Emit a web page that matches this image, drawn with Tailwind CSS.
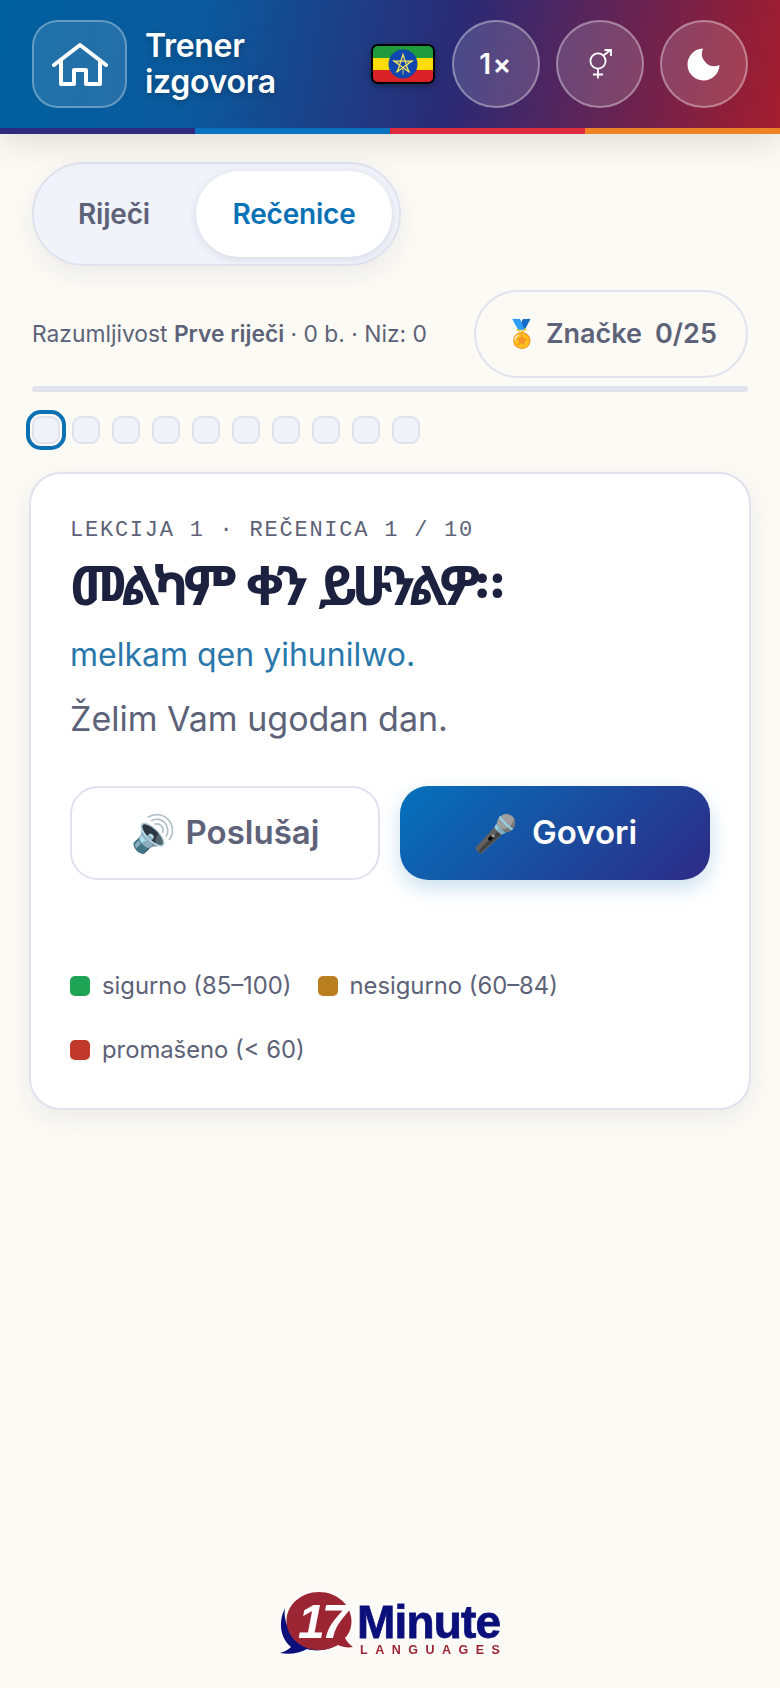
<!DOCTYPE html>
<html lang="hr">
<head>
<meta charset="utf-8">
<script src="https://cdn.jsdelivr.net/npm/@tailwindcss/browser@4"></script>
</head>
<body class="m-0 bg-[#fbfaf5] font-['Inter','Noto_Sans',sans-serif]">
<div class="w-[780px] h-[1688px] flex flex-col overflow-hidden">
  <header class="relative shadow-[0_8px_32px_rgba(0,0,0,0.12)]">
    <div class="h-[128px] px-[32px] flex items-center bg-[linear-gradient(100deg,#00609f_0%,#0a5a9d_25%,#2b2a75_58%,#a31c2e_100%)]">
      <div class="w-[95px] h-[88px] rounded-[26px] border-2 border-white/30 bg-white/12 flex items-center justify-center">
        <svg width="56" height="44" viewBox="0 0 56 44" fill="none" stroke="white" stroke-width="4" stroke-linecap="round" stroke-linejoin="round"><path d="M2 23 28 3l26 20"/><path d="M9 19V42H22V28H34V42H48V19"/></svg>
      </div>
      <div class="ml-[18px] text-white text-[32px] tracking-[-0.3px] leading-[36px] font-semibold [text-shadow:0_2px_6px_rgba(0,0,0,0.25)]">Trener<br>izgovora</div>
      <div class="ml-auto w-[64px] h-[40px] rounded-[7px] border-2 border-black overflow-hidden relative shadow-[0_2px_6px_rgba(0,0,0,0.35)] flex flex-col">
        <div class="flex-1 bg-[#1f9a3c]"></div><div class="flex-1 bg-[#fcdd09]"></div><div class="flex-1 bg-[#da2128]"></div>
        <svg class="absolute left-[15px] top-[3px]" width="30" height="30" viewBox="0 0 30 30"><circle cx="15" cy="15" r="14.5" fill="#0f47af"/><path d="M15 5.5 20.6 22.7 6 12.1H24L9.4 22.7Z" fill="none" stroke="#f5e35a" stroke-width="1.2"/><path d="M15 19.5v6M19.3 13.6l5.7-1.9M5 11.7l5.7 1.900M11.500 18.500l-3.500 4.800M18.500 18.500l3.500 4.800" stroke="#f5e35a" stroke-width="0.8"/></svg>
      </div>
      <div class="ml-[17px] w-[88px] h-[88px] rounded-full border-2 border-white/35 bg-white/15 flex items-center justify-center text-white text-[28px] tracking-[1.5px] font-semibold">1×</div>
      <div class="ml-[16px] w-[88px] h-[88px] rounded-full border-2 border-white/35 bg-white/15 flex items-center justify-center">
        <svg width="24" height="30" viewBox="0 0 24 30" fill="none" stroke="white" stroke-width="1.8"><circle cx="10" cy="12" r="7.6"/><path d="M10 19.600V29.500M5 25.500H15M15.500 6.500 22.500 1M16.500 1H23V7"/></svg>
      </div>
      <div class="ml-[16px] w-[88px] h-[88px] rounded-full border-2 border-white/35 bg-white/15 flex items-center justify-center">
        <svg width="34" height="34" viewBox="0 0 34 34"><path d="M16 1.500A16 16 0 1 0 32.500 18 12.500 12.500 0 0 1 16 1.500z" fill="white"/></svg>
      </div>
    </div>
    <div class="h-[6px] flex">
      <div class="flex-1 bg-[#2e2a7f]"></div><div class="flex-1 bg-[#0a71bf]"></div><div class="flex-1 bg-[#df2a3e]"></div><div class="flex-1 bg-[#f08226]"></div>
    </div>
  </header>

  <main class="flex-1 flex flex-col px-[32px] pt-[28px]">
    <div class="self-start w-[369px] h-[104px] rounded-full border-2 border-[#e0e2ee] bg-[#f0f3f9] p-[7px] flex shadow-[0_8px_24px_rgba(30,40,90,0.07)]">
      <div class="w-[146px] mr-[9px] flex items-center justify-center text-[28px] tracking-[-0.2px] font-semibold text-[#5d6278]">Riječi</div>
      <div class="flex-1 rounded-full bg-white flex items-center justify-center text-[28px] tracking-[-0.2px] font-semibold text-[#0a71b5] shadow-[0_2px_8px_rgba(30,40,90,0.12)]">Rečenice</div>
    </div>

    <div class="mt-[24px] flex items-center justify-between">
      <div class="text-[22.8px] text-[#5d6278]">Razumljivost <b class="font-semibold">Prve riječi</b> · 0 b. · Niz: 0</div>
      <div class="w-[274px] h-[88px] rounded-full border-2 border-[#e0e2ee] flex items-center justify-center gap-[13px] text-[27px] font-semibold text-[#5d6278]"><span>🏅 Značke</span><span>0/25</span></div>
    </div>

    <div class="mt-[8px] h-[6px] rounded-full bg-[#e0e2ee]"></div>

    <div class="mt-[24px] h-[28px] flex items-center gap-[12px]">
      <div class="w-[28px] h-[28px] rounded-[9px] bg-[#f0f3f9] border-2 border-[#e0e2ee] outline-[4px] outline-[#0a71b5] outline-offset-[2px]"></div>
      <div class="w-[28px] h-[28px] rounded-[9px] bg-[#f0f3f9] border-2 border-[#e0e2ee]"></div>
      <div class="w-[28px] h-[28px] rounded-[9px] bg-[#f0f3f9] border-2 border-[#e0e2ee]"></div>
      <div class="w-[28px] h-[28px] rounded-[9px] bg-[#f0f3f9] border-2 border-[#e0e2ee]"></div>
      <div class="w-[28px] h-[28px] rounded-[9px] bg-[#f0f3f9] border-2 border-[#e0e2ee]"></div>
      <div class="w-[28px] h-[28px] rounded-[9px] bg-[#f0f3f9] border-2 border-[#e0e2ee]"></div>
      <div class="w-[28px] h-[28px] rounded-[9px] bg-[#f0f3f9] border-2 border-[#e0e2ee]"></div>
      <div class="w-[28px] h-[28px] rounded-[9px] bg-[#f0f3f9] border-2 border-[#e0e2ee]"></div>
      <div class="w-[28px] h-[28px] rounded-[9px] bg-[#f0f3f9] border-2 border-[#e0e2ee]"></div>
      <div class="w-[28px] h-[28px] rounded-[9px] bg-[#f0f3f9] border-2 border-[#e0e2ee]"></div>
    </div>

    <section class="mt-[28px] -mx-[3px] h-[638px] rounded-[32px] border-2 border-[#e0e2ee] bg-white px-[39px] pt-[43px] shadow-[0_8px_24px_rgba(30,40,90,0.07)]">
      <div class="font-['Liberation_Mono',monospace] text-[22px] leading-[28px] tracking-[1.76px] text-[#5d6278]">LEKCIJA 1 · REČENICA 1 / 10</div>
      <div class="mt-[9px] font-['Noto_Sans_Ethiopic','Noto_Sans',sans-serif] text-[54px] tracking-[-5.4px] [word-spacing:6px] leading-[60px] font-bold text-[#1c2140]">መልካም ቀን ይሁንልዎ።</div>
      <div class="mt-[21px] text-[32px] leading-[40px] text-[#2a77ab]">melkam qen yihunilwo.</div>
      <div class="mt-[22px] text-[34px] leading-[44px] text-[#5d6278]">Želim Vam ugodan dan.</div>
      <div class="mt-[45px] grid grid-cols-2 gap-[20px]">
        <div class="h-[94px] rounded-[28px] border-2 border-[#e0e2ee] flex items-center justify-center gap-[10px] text-[33px] font-semibold text-[#5d6278]"><span class="text-[36px]">🔊</span>Poslušaj</div>
        <div class="h-[94px] rounded-[28px] bg-[linear-gradient(135deg,#0572bc,#2e2a85)] flex items-center justify-center gap-[14px] text-[33px] font-semibold text-white shadow-[0_8px_20px_rgba(10,113,181,0.22)]"><span class="text-[36px]">🎤</span>Govori</div>
      </div>
      <div class="mt-[92px] flex flex-wrap gap-x-[26px] gap-y-[36px] text-[23.800px] leading-[28px] text-[#5d6278]">
        <div class="flex items-center gap-[12px]"><span class="w-[20px] h-[20px] rounded-[5px] bg-[#1fa355]"></span>sigurno (85–100)</div>
        <div class="flex items-center gap-[12px]"><span class="w-[20px] h-[20px] rounded-[5px] bg-[#b97f1f]"></span>nesigurno (60–84)</div>
        <div class="w-full flex items-center gap-[12px]"><span class="w-[20px] h-[20px] rounded-[5px] bg-[#c0392b]"></span>promašeno (&lt; 60)</div>
      </div>
    </section>

    <div class="mt-auto mb-[30px] self-center w-[224px] h-[68px] relative drop-shadow-[0_0_4px_white]">
      <svg class="absolute left-0 top-0" width="84" height="68" viewBox="0 0 84 68"><path d="M7 18C0 32 2 48 13 57 10 60 6 62 2 63 12 65 22 63 29 59 39 62 50 60 59 55 40 60 18 52 9 35 7 29 6 24 7 18Z" fill="#0b0f7a"/><path d="M41 2C59 2 73.500 15 73.500 31 73.500 38 71 44 67 48 69 52 72 55 75 57 70 58 64 57 60 55 55 58 48 60 41 60 23 60 8.500 47 8.500 31 8.500 15 23 2 41 2Z" fill="#9c2533"/></svg>
      <div class="absolute left-[20px] top-[5px] text-white text-[48px] leading-[54px] tracking-[-3px] font-bold italic font-['Liberation_Sans',sans-serif]">17</div>
      <div class="absolute left-[79px] top-[12px] text-[#0b0f7a] text-[46px] leading-[40px] tracking-[-0.8px] [-webkit-text-stroke:0.8px_#0b0f7a] font-bold font-['Liberation_Sans',sans-serif]">Minute</div>
      <div class="absolute left-[82px] top-[53px] text-[#9c2533] text-[12.500px] leading-[14px] font-bold tracking-[7.500px] font-['Liberation_Sans',sans-serif]">LANGUAGES</div>
    </div>
  </main>
</div>
</body>
</html>
